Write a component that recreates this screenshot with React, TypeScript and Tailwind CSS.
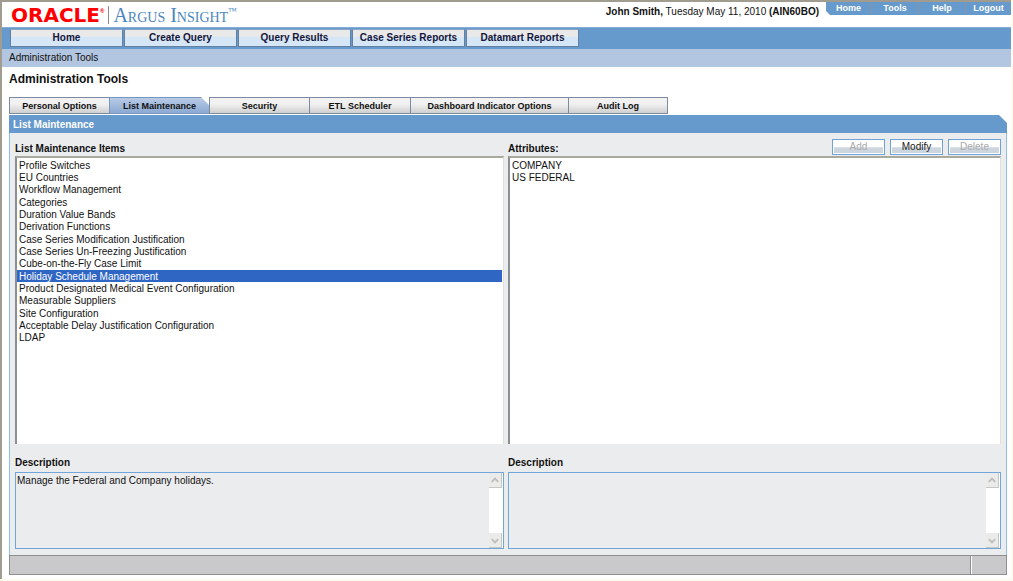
import React, { useRef, useState } from 'react';

const TOP_LINKS = ['Home', 'Tools', 'Help', 'Logout'];

const MAIN_NAV = ['Home', 'Create Query', 'Query Results', 'Case Series Reports', 'Datamart Reports'];

const TABS = [
    { name: 'Personal Options', width: 'w-[100px]' },
    { name: 'List Maintenance', width: 'w-[100px]' },
    { name: 'Security', width: 'w-[100px]' },
    { name: 'ETL Scheduler', width: 'w-[101px]' },
    { name: 'Dashboard Indicator Options', width: 'w-[158px]' },
    { name: 'Audit Log', width: 'w-[100px]' },
];

const ITEMS = [
    'Profile Switches',
    'EU Countries',
    'Workflow Management',
    'Categories',
    'Duration Value Bands',
    'Derivation Functions',
    'Case Series Modification Justification',
    'Case Series Un-Freezing Justification',
    'Cube-on-the-Fly Case Limit',
    'Holiday Schedule Management',
    'Product Designated Medical Event Configuration',
    'Measurable Suppliers',
    'Site Configuration',
    'Acceptable Delay Justification Configuration',
    'LDAP',
];

const ATTRIBUTES = ['COMPANY', 'US FEDERAL'];

export default function App() {
    const [tab, setTab] = useState('List Maintenance');
    const [item, setItem] = useState('Holiday Schedule Management');

    return (
        <div className="bg-[#fbfbf0] pr-[2px] pb-[3px] font-['Liberation_Sans',Arial,sans-serif] text-[10px] text-[#111]">
            <div className="border-t-2 border-l-2 border-[#a09c90] bg-white pb-1">
                <Header />
                <MainNav />
                <div className="h-[18px] bg-[#b3c6e1] pl-[7px] leading-[18px]">Administration Tools</div>

                <main className="pr-1 pl-[7px]">
                    <h1 className="pt-1 pb-[10px] text-[12px] leading-4 font-bold">Administration Tools</h1>
                    <div role="tablist" className="flex">
                        {TABS.map((t) => (
                            <Tab key={t.name} tab={t} active={t.name === tab} onSelect={() => setTab(t.name)} />
                        ))}
                    </div>

                    <section className="mt-px">
                        <h2 className="h-[18px] bg-[#6699cc] pl-1 text-[10px] leading-5 font-bold text-white [clip-path:polygon(0_0,calc(100%-8px)_0,100%_8px,100%_100%,0_100%)]">
                            List Maintenance
                        </h2>
                        <div className="grid grid-cols-[489fr_493fr] gap-x-1 border-x border-[#8fbdec] bg-[#ebecee] px-[5px] pb-[6px]">
                            <div>
                                <label htmlFor="items" className="flex h-[23px] items-end leading-[14px] font-bold">
                                    List Maintenance Items
                                </label>
                                <ListBox id="items" options={ITEMS} value={item} onChange={setItem} />
                                <Description id="item-description" text="Manage the Federal and Company holidays." />
                            </div>
                            <div>
                                <div className="flex h-[23px] items-end justify-between">
                                    <label htmlFor="attributes" className="leading-[14px] font-bold">
                                        Attributes:
                                    </label>
                                    <div className="flex gap-[5px] pb-px">
                                        <ActionButton label="Add" disabled />
                                        <ActionButton label="Modify" />
                                        <ActionButton label="Delete" disabled />
                                    </div>
                                </div>
                                <ListBox id="attributes" options={ATTRIBUTES} />
                                <Description id="attribute-description" text="" />
                            </div>
                        </div>
                        {/* Status bar */}
                        <div className="flex h-5 border border-[#8f8f8f] bg-[#c9c9cb]">
                            <div className="flex-1 border-r border-[#8f8f8f]" />
                            <div className="w-[35px] border-l border-white" />
                        </div>
                    </section>
                </main>
            </div>
        </div>
    );
}

const Header = () => (
    <header className="flex h-[25px] justify-between">
        <div className="flex items-center pt-px pl-[9px]">
            <span className="font-['DejaVu_Sans',sans-serif] text-[20px] leading-6 font-bold text-[#f00]">ORACLE</span>
            <span className="mb-2 text-[6px] leading-none font-bold text-[#f00]">®</span>
            <span className="mr-1 ml-1 h-[18px] w-px bg-[#8c8c8c]" />
            <span className="font-['Liberation_Serif',serif] text-[20px] leading-6 text-[#4a86bd] [font-variant:small-caps]">
                Argus Insight
            </span>
            <span className="mb-2 font-['Liberation_Serif',serif] text-[9px] leading-none text-[#4a86bd]">™</span>
        </div>
        <div className="flex items-start">
            <p className="pt-1 pr-[7px] leading-3">
                <b>John Smith,</b> Tuesday May 11, 2010 <b>(AIN60BO)</b>
            </p>
            <nav className="flex bg-[#6699cc] [clip-path:polygon(0_0,100%_0,100%_100%,4px_100%,0_calc(100%-4px))]">
                {TOP_LINKS.map((link) => (
                    <a
                        key={link}
                        href="#"
                        className="h-[13px] w-[47px] border-l border-[#8794a8] text-center text-[9px] leading-3 font-bold text-white first:w-[45px] first:border-l-0 last:w-[46px]"
                    >
                        {link}
                    </a>
                ))}
            </nav>
        </div>
    </header>
);

const MainNav = () => (
    <nav className="flex h-[22px] gap-px border-t border-[#85acd6] bg-[#6699cc] pt-px pl-2">
        {MAIN_NAV.map((name) => (
            <a
                key={name}
                href="#"
                className="h-[18px] w-[113px] border border-t-[#8ba5c4] border-r-[#647f9f] border-b-[#647f9f] border-l-[#647f9f] bg-linear-to-b from-[#e9e9e9] from-40% to-[#d5e6f7] to-45% text-center text-[10px] leading-4 font-bold text-[#15153a]"
            >
                {name}
            </a>
        ))}
    </nav>
);

const Tab = ({ tab, active, onSelect }: any) => (
    <button
        type="button"
        role="tab"
        aria-selected={active}
        onClick={onSelect}
        className={`h-[17px] border border-r-0 pt-px text-[9px] leading-[15px] font-bold last:border-r ${tab.width} ${
            active
                ? 'border-[#7795bd] bg-linear-to-b from-[#b9cbe6] to-[#8ba9d2] [clip-path:polygon(0_0,calc(100%-8px)_0,100%_8px,100%_100%,0_100%)]'
                : 'border-[#7c8ba0] bg-linear-to-b from-[#f1f1f1] from-40% to-[#cfcfcf]'
        }`}
    >
        {tab.name}
    </button>
);

const ListBox = ({ id, options, value, onChange }: any) => (
    <select
        id={id}
        size={15}
        value={value}
        onChange={(e) => onChange?.(e.target.value)}
        className="block h-[288px] w-full appearance-none border-t-2 border-r border-l-2 border-t-[#aaa99d] border-r-[#e0dfd8] border-l-[#8a8f94] bg-white pt-px pr-px outline-none"
    >
        {options.map((o: string) => (
            <option
                key={o}
                value={o}
                className="min-h-0 p-0 pt-px pl-[2px] text-[10px] checked:bg-linear-to-r checked:from-[#2f66c4] checked:to-[#2f66c4] checked:text-white nth-[3n]:mb-px"
            >
                {o}
            </option>
        ))}
    </select>
);

const ActionButton = ({ label, disabled }: any) => (
    <button
        type="button"
        disabled={disabled}
        className="h-4 w-[53px] border border-[#6fa3d8] bg-linear-to-b from-white from-50% to-[#cdd5df] to-55% text-center text-[10px] leading-[14px] text-[#222] shadow-[inset_0_0_0_1px_#fff] disabled:text-[#aaa]"
    >
        {label}
    </button>
);

const Description = ({ id, text }: any) => {
    const ref = useRef<HTMLTextAreaElement>(null);

    return (
        <>
            <label htmlFor={id} className="block pt-3 pb-[2px] leading-[14px] font-bold">
                Description
            </label>
            <div className="flex h-[77px] border border-[#72a5da]">
                <textarea
                    id={id}
                    ref={ref}
                    readOnly
                    value={text}
                    className="flex-1 resize-none overflow-hidden bg-transparent px-px py-[2px] leading-3 outline-none"
                />
                <div className="flex w-[14px] flex-col justify-between bg-white">
                    <ScrollButton label="Scroll up" path="M3 8l3.500-3.500L10 8" onClick={() => ref.current?.scrollBy(0, -12)} />
                    <ScrollButton label="Scroll down" path="M3 5l3.500 3.500L10 5" onClick={() => ref.current?.scrollBy(0, 12)} />
                </div>
            </div>
        </>
    );
};

const ScrollButton = ({ label, path, onClick }: any) => (
    <button
        type="button"
        aria-label={label}
        onClick={onClick}
        className="h-[15px] w-[13px] border-r border-b border-[#c6c6c2] bg-[#ebebe9]"
    >
        <svg width="12" height="13" viewBox="0 0 13 13" fill="none" stroke="#bdbdbd" strokeWidth="2">
            <path d={path} />
        </svg>
    </button>
);
